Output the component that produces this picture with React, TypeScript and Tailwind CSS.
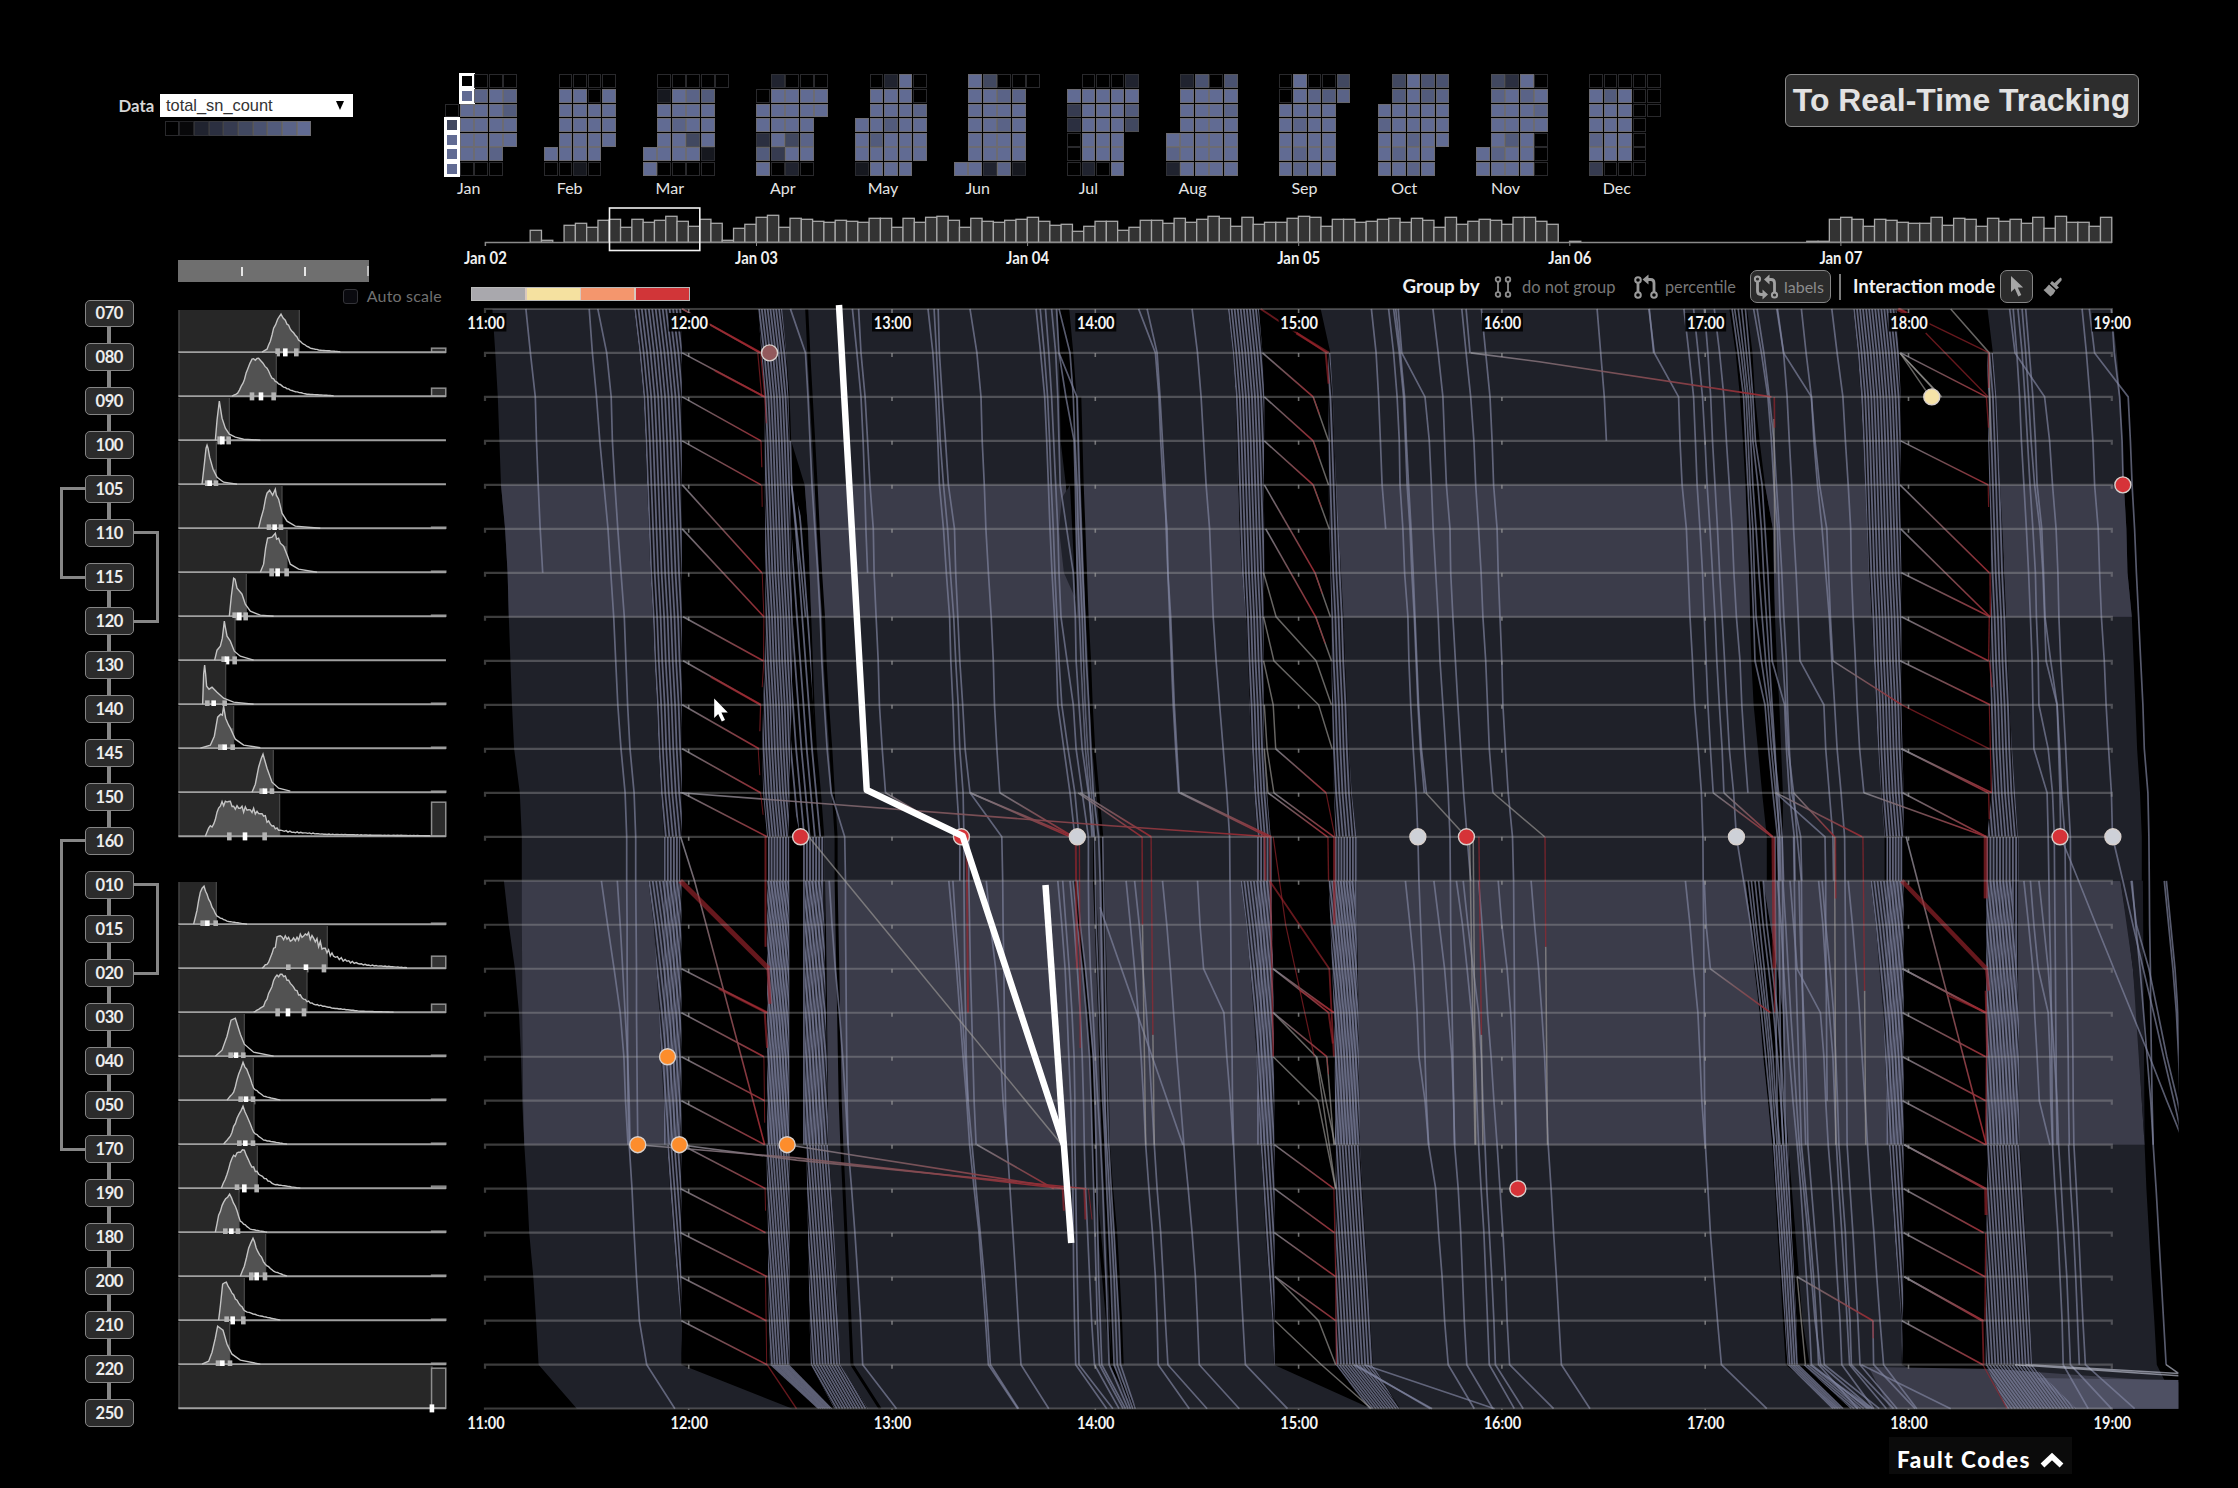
import React from "react";

/* ---------- geometry ---------- */
type Tile = "A" | "B" | "C";
const px = (t: Tile, k: number) =>
  t === "A" ? 470 + k / 2.45 : t === "B" ? 1100 + k / 2.8 : 1640 + k / 2.8;
const ry = (r: number) => 308.9 + 43.99 * r;
const pts = (t: Tile, r0: number, xs: number[]) =>
  xs.map((x, i) => `${px(t, x).toFixed(1)},${ry(r0 + i).toFixed(1)}`).join(" ");
const pairs = (t: Tile, a: number[][]) =>
  a.map(([x, r]) => `${px(t, x).toFixed(1)},${ry(r).toFixed(1)}`).join(" ");

/* ---------- calendar ---------- */
const months: { name: string; ml: string; lab: string; rows: string[] }[] = [
  { name: "Jan", ml: "ml-0", lab: "pl-[12px]", rows: [".0000", ".9898", "09997", "59999", "99999", "9998.", "9000."] },
  { name: "Feb", ml: "ml-[26.3px]", lab: "pl-[13px]", rows: [".0000", ".9909", ".9999", ".9999", ".9999", "9999.", "0010."] },
  { name: "Mar", ml: "ml-[26.3px]", lab: "pl-[13px]", rows: [".00000", ".1987.", ".9999.", ".9899.", ".9959.", "99991.", "90000."] },
  { name: "Apr", ml: "ml-[26.3px]", lab: "pl-[14px]", rows: [".2000", "09999", "99999", "9999.", "3958.", "7499.", "9020."] },
  { name: "May", ml: "ml-[26.3px]", lab: "pl-[13px]", rows: [".0290", ".9990", ".9998", "99799", "97999", "99999", "1999."] },
  { name: "Jun", ml: "ml-[26.3px]", lab: "pl-[12px]", rows: [".95000", ".9988.", ".9999.", ".9989.", ".9999.", ".9999.", "99281."] },
  { name: "Jul", ml: "ml-[26.3px]", lab: "pl-[12px]", rows: [".0002", "99999", "49997", "39995", "0999.", "0999.", "0209."] },
  { name: "Aug", ml: "ml-[26.3px]", lab: "pl-[13px]", rows: [".2606", ".9999", ".9998", ".9999", "99999", "89999", "29999"] },
  { name: "Sep", ml: "ml-[40.3px]", lab: "pl-[13px]", rows: ["09005", "09878", "9999.", "9899.", "9999.", "9899.", "9899."] },
  { name: "Oct", ml: "ml-[26.3px]", lab: "pl-[14px]", rows: [".5966", ".7978", "99999", "89999", "99899", "9899.", "9989."] },
  { name: "Nov", ml: "ml-[26.3px]", lab: "pl-[15px]", rows: [".5390", ".8989", ".9998", ".9999", ".9790", "98990", "99990"] },
  { name: "Dec", ml: "ml-[40.3px]", lab: "pl-[14px]", rows: ["00000", "97900", "99900", "9990.", "8990.", "9990.", "4000."] },
];
const shade: Record<string, string> = {
  ".": "", "0": "bg-black border border-[#29292c]", "1": "bg-[#16181f] border border-[#2a2b30]",
  "2": "bg-[#20232f] border border-[#303136]", "3": "bg-[#2b2f40] border border-[#38393f]",
  "4": "bg-[#363b50] border border-[#424349]", "5": "bg-[#414860] border border-[#4e4f54]",
  "6": "bg-[#4a5270] border border-[#57575c]", "7": "bg-[#525b7c] border border-[#5f5f63]",
  "8": "bg-[#5a6387] border border-[#66666b]", "9": "bg-[#616b93] border border-[#6c6b72]",
};
const Month = ({ m, first }: { m: (typeof months)[0]; first: boolean }) => {
  const n = m.rows[0].length;
  return (
    <div className={`shrink-0 ${m.ml}`}>
      {m.rows.map((row, r) => (
        <div key={r} className="flex h-[14.6px]">
          {row.split("").map((c, i) => {
            const sel = first && ((i === 1 && r < 2) || (i === 0 && r > 2));
            return (
              <div key={i} className="flex h-[14.6px] w-[14.5px] shrink-0">
                <div className={`m-[0.4px] flex-1 ${shade[c]} ${sel ? "outline-[3px] outline-white -outline-offset-2" : ""}`} />
              </div>
            );
          })}
        </div>
      ))}
      <div className={`mt-[2px] text-[16px] leading-[20px] text-[#e4e4e4] ${m.lab} ${n > 5 ? "w-[87px]" : "w-[72px]"}`}>{m.name}</div>
    </div>
  );
};

/* ---------- overview ---------- */
const lead: [number, number][] = [[4, 12], [5, 2], [7, 17], [8, 19], [9, 15], [10, 22], [11, 23], [12, 15], [13, 23], [14, 20], [15, 22], [16, 26], [17, 21], [18, 16], [19, 23], [20, 19], [21, 2], [22, 14], [23, 18]];
const mid = [25, 27, 15, 24, 23, 21, 20, 22, 21, 20, 24, 24, 15, 24, 20, 25, 26, 22, 15, 24, 21, 20, 22, 23, 25, 21, 17, 18, 11, 16, 21, 21, 12, 15, 22, 22, 19, 24, 20, 23, 26, 24, 16, 25, 18, 20, 20, 24, 26, 25, 16, 23, 23, 20, 21, 23, 24, 20, 24, 22, 15, 25, 18, 21, 23, 22, 18, 25, 25, 21, 18];
const tail = [23, 25, 23, 16, 23, 22, 20, 19, 19, 25, 17, 24, 23, 16, 24, 21, 23, 19, 25, 14, 26, 20, 20, 16, 25];
const bars: [number, number][] = [...lead, ...mid.map((h, i) => [24 + i, h] as [number, number]), [96, 1], [117, 1], [118, 1], ...tail.map((h, i) => [119 + i, h] as [number, number])];
const Overview = () => (
  <svg viewBox="450 207 1788 63" className="block h-[63px] w-[1788px] shrink-0">
    {bars.map(([h, v]) => (
      <rect key={h} x={485 + h * 11.297} y={242.3 - v} width={11.3} height={v} fill="#333" stroke="#a8a8a8" strokeWidth={1.3} />
    ))}
    <path d="M485.4 246V242.5H2112" fill="none" stroke="#8a8a8a" strokeWidth={1.4} />
    {["Jan 02", "Jan 03", "Jan 04", "Jan 05", "Jan 06", "Jan 07"].map((l, i) => (
      <g key={l}>
        <path d={`M${485.4 + i * 271.1} 242v4`} stroke="#8a8a8a" />
        <text x={485.4 + i * 271.1} y={263.8} textAnchor="middle" fontSize={16.5} fontWeight={700} fill="#f0f0f0" textLength={43} lengthAdjust="spacingAndGlyphs">{l}</text>
      </g>
    ))}
    <rect x={609.5} y={208} width={90.3} height={42.5} fill="none" stroke="#f2f2f2" strokeWidth={1.6} />
  </svg>
);

/* ---------- station distributions ---------- */
type Hist = { s: number; m: number[]; b: number; n?: number; p: number[] };
const upper: Hist[] = [
  { s: 777, m: [712, 735, 768], b: 4, n: 1, p: [665, 0, 680, 3, 690, 11, 700, 24, 712, 33, 722, 38, 735, 32, 750, 23, 765, 17, 775, 12, 790, 8, 810, 4, 840, 2, 900, 0.5] },
  { s: 708, m: [635, 662, 700], b: 8, n: 1, p: [575, 0, 592, 3, 608, 13, 622, 27, 635, 37, 645, 36, 655, 38, 668, 33, 680, 28, 695, 18, 710, 14, 730, 9, 760, 5, 800, 2, 880, 0.5] },
  { s: 567, m: [538, 546, 565], b: 0, p: [525, 0, 530, 20, 537, 39, 545, 22, 555, 12, 567, 6, 585, 3, 610, 1, 660, 0] },
  { s: 528, m: [501, 508, 527], b: 0, p: [485, 0, 492, 20, 497, 36, 500, 39, 503, 36, 508, 27, 518, 15, 530, 7, 550, 2, 590, 0] },
  { s: 725, m: [686, 703, 722], b: 1, p: [655, 0, 662, 10, 670, 19, 676, 30, 680, 35, 688, 38, 697, 33, 705, 39, 708, 33, 715, 29, 725, 15, 740, 7, 765, 2, 840, 0] },
  { s: 740, m: [694, 712, 739], b: 1, p: [660, 0, 670, 8, 676, 24, 682, 34, 695, 35, 705, 39, 709, 33, 715, 34, 720, 29, 730, 26, 742, 16, 750, 8, 775, 3, 830, 0] },
  { s: 618, m: [583, 597, 616], b: 1, p: [567, 0, 573, 20, 580, 38, 584, 37, 590, 28, 605, 22, 615, 12, 630, 5, 660, 1, 700, 0] },
  { s: 584, m: [550, 560, 583], b: 0, p: [523, 0, 530, 10, 540, 14, 546, 22, 552, 39, 555, 33, 560, 24, 570, 19, 582, 9, 600, 4, 640, 0] },
  { s: 556, m: [501, 520, 553], b: 1, p: [487, 0, 490, 30, 493, 39, 496, 30, 499, 18, 506, 15, 515, 17, 530, 12, 550, 6, 580, 2, 640, 0] },
  { s: 580, m: [540, 553, 577], b: 1, p: [480, 0, 510, 3, 522, 12, 532, 31, 541, 34, 546, 33, 550, 42, 556, 30, 565, 23, 570, 20, 585, 9, 610, 3, 660, 0.5] },
  { s: 699, m: [664, 674, 695], b: 1, p: [635, 0, 645, 8, 655, 25, 663, 34, 668, 38, 680, 24, 695, 10, 715, 4, 750, 1] },
  { s: 718, m: [567, 614, 673], b: 34, n: 3, p: [495, 0, 505, 8, 520, 12, 530, 24, 540, 30, 555, 35, 570, 35, 580, 30, 600, 28, 620, 26, 650, 25, 670, 20, 690, 12, 715, 6, 760, 4, 850, 2, 1000, 1, 1170, 0.5] },
];
const lower: Hist[] = [
  { s: 528, m: [487, 501, 526], b: 1, n: 1, p: [460, 0, 470, 14, 480, 32, 491, 38, 500, 30, 515, 17, 530, 8, 560, 3, 620, 0] },
  { s: 861, m: [744, 797, 851], b: 12, n: 3.5, p: [665, 0, 685, 6, 700, 20, 715, 32, 740, 29, 750, 27, 770, 31, 800, 33, 820, 30, 850, 20, 880, 12, 920, 7, 980, 3, 1100, 0.5] },
  { s: 800, m: [712, 743, 791], b: 8, n: 1.5, p: [640, 0, 670, 6, 690, 22, 705, 35, 725, 38, 745, 32, 765, 22, 790, 13, 820, 8, 880, 4, 960, 1, 1060, 0] },
  { s: 612, m: [571, 587, 609], b: 1, p: [525, 0, 545, 6, 560, 20, 572, 36, 585, 38, 600, 22, 612, 12, 640, 4, 700, 0] },
  { s: 639, m: [601, 617, 638], b: 1, n: 1, p: [560, 0, 580, 8, 595, 26, 608, 38, 625, 26, 640, 12, 670, 4, 720, 0] },
  { s: 641, m: [597, 615, 638], b: 1, n: 1, p: [550, 0, 570, 8, 590, 26, 608, 38, 620, 28, 640, 12, 670, 4, 740, 0] },
  { s: 651, m: [590, 612, 649], b: 2, n: 1.5, p: [543, 0, 560, 14, 575, 30, 595, 36, 612, 38, 630, 24, 655, 14, 700, 4, 780, 0] },
  { s: 596, m: [555, 573, 593], b: 1, n: 1, p: [525, 0, 535, 17, 550, 30, 568, 38, 585, 26, 600, 11, 630, 3, 680, 0] },
  { s: 676, m: [633, 649, 674], b: 1, n: 1, p: [600, 0, 612, 10, 625, 28, 638, 38, 652, 25, 675, 12, 700, 5, 740, 0] },
  { s: 612, m: [559, 577, 609], b: 1, n: 1, p: [535, 0, 540, 14, 547, 36, 558, 38, 575, 27, 595, 17, 615, 9, 650, 5, 720, 0] },
  { s: 568, m: [533, 546, 569], b: 1, p: [485, 0, 505, 3, 515, 12, 525, 26, 532, 38, 548, 34, 560, 20, 575, 10, 600, 4, 660, 0] },
  { s: 1175, m: [1175], b: 40, p: [] },
];
const HistRow = ({ h }: { h: Hist }) => {
  const X = (k: number) => k / 3 - 137.7;
  const line: number[][] = [];
  for (let i = 0; i < h.p.length; i += 2) {
    const x = X(h.p[i]), v = h.p[i + 1];
    line.push([x, v]);
    if (h.n && i + 2 < h.p.length) {
      const x2 = X(h.p[i + 2]), v2 = h.p[i + 3];
      const n = Math.max(1, Math.round((x2 - x) / 1.8));
      for (let j = 1; j < n; j++) {
        const f = j / n, b = v + (v2 - v) * f;
        line.push([x + (x2 - x) * f, Math.max(0, b + Math.sin((x + j) * 12.9 + j * 2.4) * h.n * Math.min(1, b / 22))]);
      }
    }
  }
  const cut = line.filter((q) => q[0] <= X(h.s));
  const str = (a: number[][]) => a.map(([x, v]) => `${x.toFixed(1)},${(43.2 - v).toFixed(1)}`).join(" ");
  return (
    <svg viewBox="0 0 268 44" className="block h-[43.99px] w-[268px] overflow-visible">
      <rect x={0.3} y={1} width={X(h.s)} height={42.5} fill="#272727" />
      <path d={`M1 1V43M${X(h.s)} 1V43`} stroke="#484848" strokeWidth={1.2} />
      {cut.length > 0 && <polygon points={`${str(cut)} ${X(h.s)},${43.2 - cut[cut.length - 1][1]} ${X(h.s)},43.2`} fill="#525252" />}
      {h.b > 0 && <rect x={253.6} y={43.2 - h.b} width={14.2} height={h.b} fill={h.b > 20 ? "#2c2c2c" : "#333"} stroke="#8e8e8e" strokeWidth={1.5} />}
      <path d="M0.3 43.2H268" stroke="#a0a0a0" strokeWidth={1.9} />
      {line.length > 0 && <polyline points={str(line)} fill="none" stroke="#c4c4c4" strokeWidth={1.4} />}
      {h.m.map((k, i) => (
        <rect key={i} x={X(k) - 2.3} y={39.4} width={4.6} height={8} fill={i === 1 || h.m.length === 1 ? "#fff" : "#b4b4b4"} />
      ))}
    </svg>
  );
};

/* ---------- marey chart data ---------- */
const z1L = [402, 415, 425, 430, 434, 438, 442, 448, 452, 458, 462, 468, 475];
const z1Lb = [437, 450, 457, 463, 468, 475, 483, 490, 498, 507, 517, 518, 790];
const z4L = [358, 372, 380, 383, 386, 390, 397, 408, 415, 418, 425, 432, 440];
const z4Lb = [393, 410, 420, 430, 437, 443, 450, 457, 463, 473, 483, 487, 760];
const z5R = [618, 645, 652, 656, 662, 668, 675, 682, 687, 692, 697, 705, 718];
const z5Rb = [720, 720, 722, 724, 725, 727, 728, 735, 742, 750, 756, 764, 840];
const z7L = [597, 610, 618, 625, 630, 635, 640, 648, 655, 660, 667, 675, 685];
const z7Lb = [645, 660, 670, 680, 686, 692, 697, 705, 712, 722, 732, 733, 1000];
const z8R = [973, 988, 998, 1003, 1008, 1015, 1022, 1025, 1030, 1035, 1042, 1050, 1058];
const z8Rb = [1060, 1060, 1060, 1061, 1062, 1062, 1063, 1072, 1080, 1087, 1092, 1098, 1220];
type Area = [Tile, number[], number[], Tile, number[], number[]];
const areas: Area[] = [
  ["A", [55, 62, 68, 72, 76, 86, 92, 95, 99, 103, 108, 122, 127], [127, 127, 128, 128, 129, 130, 133, 140, 145, 155, 162, 168, 262], "A", z1L, z1Lb],
  ["A", [765, 775, 783, 787, 820, 828, 832, 836, 840, 844, 850, 860, 868], [870, 872, 874, 875, 876, 877, 878, 885, 892, 898, 902, 907, 975], "B", z4L, z4Lb],
  ["B", z5R, z5Rb, "C", [250, 268, 280, 288, 295, 300, 305, 308, 312, 318, 330, 342, 355], [295, 310, 320, 335, 345, 358, 370, 378, 385, 393, 400, 408, 560]],
  ["C", [300, 315, 322, 335, 350, 372, 375, 378, 383, 390, 395, 400, 400], [345, 365, 385, 400, 405, 408, 415, 425, 435, 445, 455, 475, 640], "C", z7L, z7Lb],
  ["C", z8R, z8Rb, "C", [1320, 1335, 1345, 1350, 1355, 1362, 1365, 1377, 1382, 1387, 1392, 1400, 1405], [1345, 1365, 1380, 1392, 1398, 1405, 1413, 1418, 1425, 1432, 1440, 1447, 1508]],
];
const poly = (lt: Tile, l: number[], rt: Tile, r: number[], row: number) =>
  pts(lt, row, l) + " " + pts(rt, row, r).split(" ").reverse().join(" ");
const areaPolys = areas.flatMap(([lt, l, lb, rt, r, rb]) => [
  poly(lt, [...l, l[12]], rt, [...r, r[12]], 0),
  poly(lt, lb, rt, rb, 13),
]);

/* dense bundles: [tile, first row, left edge, right edge, offsets per row, spacing] */
const rep = (n: number, v: number) => Array(n).fill(v) as number[];
type Zone = [Tile, number, number[], number[], number[], number];
const flow = [0, 13, 23, 28, 32, 36, 40, 46, 50, 56, 60, 66, 76];
const flowL = [0, 15, 28, 40, 50, 58, 66];
const flowE = [0, 8, 16, 24, 31, 38];
const zones: Zone[] = [
  ["A", 0, z1L, rep(13, 519), flow, 8.5],
  ["A", 12, rep(8, 475), rep(8, 515), rep(8, 0), 7.5],
  ["A", 13, z1Lb.slice(0, 7), rep(7, 518), flowL, 8.5],
  ["A", 19, z1Lb.slice(6, 12), rep(6, 518), flowE, 8],
  ["A", 0, [706, 714, 722, 722, 722, 723, 723, 724, 722, 718, 716, 718, 728], [765, 775, 780, 783, 785, 785, 788, 790, 790, 788, 785, 783, 780], flow, 7],
  ["A", 12, rep(8, 730), rep(8, 782), rep(8, 0), 7],
  ["A", 13, rep(7, 728), rep(7, 782), flowL, 7],
  ["A", 19, [726, 728, 730, 730, 732, 735], rep(6, 783), flowE, 6.5],
  ["A", 4, [786, 788, 790, 790, 790, 788, 786, 786, 810], [790, 820, 828, 832, 836, 840, 846, 856, 866], [0, 10, 18, 26, 34, 42, 50, 60, 70], 13],
  ["A", 12, rep(8, 816), rep(8, 868), rep(8, 0), 7.5],
  ["A", 13, rep(7, 820), [862, 868, 870, 872, 874, 876, 878], flowL, 8],
  ["A", 19, [824, 826, 828, 830, 832, 835], [878, 885, 892, 898, 902, 907], flowE, 7],
  ["A", 24, [735, 852], [782, 888], [0, 112], 5.5],
  ["A", 24, [835, 893], [907, 975], [0, 62], 7],
  ["B", 0, z4L, [445, 455, 460, 460, 458, 460, 460, 458, 458, 458, 460, 468, 478], flow, 8.5],
  ["B", 12, rep(8, 440), rep(8, 482), rep(8, 0), 9],
  ["B", 13, z4Lb.slice(0, 7), [478, 482, 485, 486, 487, 488, 488], flowL, 9],
  ["B", 19, z4Lb.slice(6, 12), rep(6, 489), flowE, 9],
  ["B", 1, [638, 640, 640, 640, 642, 645, 648, 648, 650, 652, 655, 660], z5R.slice(1), flow.slice(1), 9],
  ["B", 12, rep(8, 658), rep(8, 720), rep(8, 0), 8],
  ["B", 13, [640, 645, 650, 655, 657, 658, 658], [712, 718, 720, 724, 725, 727, 728], flowL, 8],
  ["B", 19, rep(6, 660), z5Rb.slice(6, 12), flowE, 8.5],
  ["B", 24, [660, 752], [764, 838], [0, 95], 8],
  ["C", 0, z7L, [718, 725, 730, 730, 728, 730, 732, 732, 732, 732, 735, 738, 738], flow, 8.5],
  ["C", 12, rep(8, 690), rep(8, 735), rep(8, 0), 8],
  ["C", 13, z7Lb.slice(0, 7), rep(7, 738), flowL, 9],
  ["C", 19, z7Lb.slice(6, 12), [738, 738, 738, 738, 736, 734], flowE, 9],
  ["C", 1, [972, 974, 975, 978, 982, 982, 983, 980, 982, 985, 985, 972], z8R.slice(1), flow.slice(1), 9],
  ["C", 12, rep(8, 970), rep(8, 1060), rep(8, 0), 9],
  ["C", 13, rep(7, 970), [1040, 1048, 1055, 1061, 1062, 1062, 1063], flowL, 9],
  ["C", 19, [972, 972, 970, 970, 968, 968], z8Rb.slice(6, 12), flowE, 8.5],
  ["C", 24, [968, 1028], [1098, 1222], [0, 90], 9],
  ["C", 19, [372, 380, 388, 396, 405, 413], [415, 420, 425, 432, 438, 442], flowE, 7],
  ["C", 24, [413, 538], [445, 572], [0, 125], 7],
  ["C", 24, [457, 590], [478, 655], [0, 150], 9],
];

const lines: [Tile, number, number[]][] = [
  ["A", 0, [137, 148, 160, 163, 167, 172, 178]],
  ["A", 0, [292, 300, 310, 318, 328, 338, 345, 352, 357, 362, 370, 380, 384, 384, 385, 385, 386, 386, 387, 390, 397, 402, 408, 415, 433, 502]],
  ["A", 0, [313, 335, 346, 349, 355, 362, 370, 378, 382, 386, 392, 402, 406, 406, 407, 408, 408, 409, 410, 411]],
  ["A", 13, [322, 337, 353, 368, 377, 381, 387]],
  ["A", 13, [361, 368, 374, 380, 386, 390, 392]],
  ["A", 0, [785, 822, 828, 833, 838, 845, 852, 858, 862, 868, 875, 885, 918, 920, 920, 921, 922, 923, 924, 926, 935, 943, 950, 957, 962, 1045]],
  ["A", 3, [785, 788, 800, 812, 822]],
  ["A", 0, [937, 948, 958, 963, 967, 970, 974]],
  ["A", 0, [952, 958, 968, 974, 980, 988, 990, 995, 1000, 1003, 1010, 1018]],
  ["A", 0, [1122, 1134, 1141, 1146, 1150, 1160, 1167, 1175, 1178, 1183, 1187, 1193, 1200, 1200]],
  ["A", 0, [1137, 1143, 1148, 1152, 1160, 1170, 1177, 1185, 1190, 1196, 1200, 1208, 1210, 1210, 1211, 1212, 1214, 1216, 1220]],
  ["A", 0, [1147, 1150, 1157, 1165, 1172, 1187, 1190, 1195, 1200, 1207, 1213, 1225, 1303, 1305, 1306, 1308, 1309, 1310, 1312, 1314]],
  ["A", 0, [1225, 1242, 1252, 1255, 1260, 1264, 1270, 1277, 1282, 1285, 1291, 1298]],
  ["A", 13, [1173, 1183, 1192, 1200, 1208, 1217, 1224, 1235, 1247, 1255, 1263, 1270, 1342]],
  ["A", 13, [1183, 1190, 1198, 1206, 1213, 1220, 1230, 1240, 1250, 1260, 1268, 1275, 1344]],
  ["A", 12, [1222, 1222, 1224, 1226, 1229, 1232, 1235, 1240]],
  ["A", 13, [1265, 1275, 1288, 1295, 1300, 1306, 1316, 1323, 1330, 1337, 1343, 1350, 1418]],
  ["A", 13, [880, 887, 895, 905, 913, 920, 926]],
  ["A", 0, [1387, 1398, 1408, 1413, 1417, 1421, 1426, 1432, 1437, 1440, 1455, 1470, 1482]],
  ["A", 0, [1397, 1407, 1415, 1420, 1424, 1429, 1433, 1438, 1443, 1450, 1465, 1482, 1492]],
  ["A", 0, [1410, 1418, 1425, 1430, 1435, 1440, 1443, 1448, 1463, 1478, 1485, 1500, 1515]],
  ["A", 0, [1425, 1435, 1440, 1443, 1446, 1462, 1478, 1483, 1485, 1492, 1500, 1515, 1528]],
  ["A", 0, [1437, 1443, 1487, 1490, 1493, 1497, 1501, 1506, 1510, 1516, 1521, 1527, 1540]],
  ["A", 0, [1443, 1470, 1478, 1482, 1487, 1490, 1495, 1500, 1503, 1507, 1513, 1522, 1530]],
  ["A", 1, [1443, 1460, 1480, 1483, 1485, 1488, 1493, 1497, 1502, 1508, 1517, 1524]],
  ["A", 13, [1440, 1450, 1458, 1463, 1467, 1472, 1475, 1477, 1478, 1479, 1481, 1484, 1560]],
  ["A", 13, [1452, 1460, 1468, 1475, 1480, 1482, 1482, 1484, 1486, 1488, 1490, 1492, 1575]],
  ["A", 13, [1470, 1480, 1488, 1495, 1500, 1503, 1505, 1508, 1513, 1518, 1523, 1530, 1590]],
  ["A", 13, [1478, 1488, 1500, 1510, 1518, 1522, 1525, 1528, 1531, 1534, 1537, 1542, 1600]],
  ["A", 13, [1487, 1495, 1508, 1518, 1527, 1531, 1534, 1536, 1538, 1540, 1544, 1548, 1606]],
  ["A", 12, [1515, 1515, 1516, 1520, 1526, 1532, 1538, 1545, 1550, 1554, 1558, 1562, 1566, 1612]],
  ["A", 12, [1530, 1532, 1534, 1538, 1542, 1546, 1550, 1556, 1560, 1565, 1570, 1574, 1578, 1618]],
  ["A", 12, [1540, 1544, 1546, 1548, 1550, 1552, 1555, 1560, 1566, 1572, 1578, 1582, 1586, 1624]],
  ["A", 12, [1550, 1552, 1554, 1556, 1558, 1560, 1562, 1565, 1571, 1578, 1584, 1590, 1594, 1630]],
  ["B", 0, [108, 155, 165, 170, 177, 188, 190, 195, 200, 205, 212, 220]],
  ["B", 0, [132, 160, 168, 175, 182, 185, 190, 198, 203, 208, 215, 222]],
  ["B", 0, [258, 273, 283, 290, 297, 307, 312, 317, 325, 335, 345, 355, 363, 364, 366, 367, 368, 370, 371, 374, 380, 386, 393, 400, 407, 525]],
  ["B", 0, [760, 773, 780, 785, 790, 800]],
  ["B", 0, [808, 822, 832, 838, 840, 848, 853, 862, 865, 870, 877, 885, 890, 893, 898, 903, 907, 910, 914, 920, 940, 948, 958, 965, 975, 1048]],
  ["B", 0, [822, 838, 850, 855, 860, 868, 873, 880, 885, 890, 897, 908]],
  ["B", 0, [828, 841, 853, 858, 864, 871, 877, 882, 887, 892, 900, 914]],
  ["B", 0, [835, 845, 910, 922, 928, 933, 940, 947, 952, 960, 968, 975, 980, 981, 982, 984, 986, 988, 990, 993, 1003, 1010, 1015, 1020, 1027, 1100]],
  ["B", 0, [932, 947, 960, 965, 970, 980, 982, 988, 995, 1002, 1010, 1018, 1028, 1038]],
  ["B", 0, [1013, 1025, 1038, 1047, 1052, 1060, 1067, 1072, 1080, 1085, 1090, 1100]],
  ["B", 0, [1025, 1036]],
  ["B", 0, [1068, 1080, 1092, 1098, 1102, 1112, 1115, 1120, 1125, 1128, 1135, 1143, 1155, 1158, 1159, 1160, 1161, 1162, 1163, 1165, 1168]],
  ["B", 0, [1392, 1402, 1412, 1418]],
  ["B", 13, [73, 85, 97, 107, 115, 122, 128, 137, 147, 155, 160, 163, 250]],
  ["B", 13, [97, 110, 120, 130, 138, 145, 152, 160, 170, 177, 183, 190, 300]],
  ["B", 13, [175, 187, 197, 206, 215, 225, 235, 247, 258, 267, 273, 278, 390]],
  ["B", 13, [273, 280, 290, 347, 355, 365, 373]],
  ["B", 13, [855, 868, 880, 888, 893, 910, 920]],
  ["B", 13, [935, 950, 965, 975, 985, 990, 993]],
  ["B", 13, [998, 1015, 1028, 1040, 1050, 1055, 1060, 1067, 1075, 1080, 1085, 1090, 1160]],
  ["B", 13, [1017, 1030, 1045, 1060, 1068, 1072, 1078, 1083, 1090, 1097, 1103, 1107, 1185]],
  ["B", 13, [1060, 1070, 1078, 1085, 1095, 1103, 1112, 1120, 1128, 1135, 1140, 1147, 1270]],
  ["B", 13, [1115, 1125, 1140, 1150, 1157, 1162, 1165]],
  ["B", 13, [1207, 1217, 1228, 1237, 1245, 1250, 1255, 1263, 1270, 1278, 1285, 1292, 1372]],
  ["B", 24, [710, 930]], ["B", 24, [716, 925]], ["B", 24, [740, 1105]],
  ["B", 0, [1538, 1550]],
  ["C", 0, [25, 40, 108, 112, 118, 130, 135, 140, 147, 153, 163, 172, 176, 177, 178, 179, 180, 180, 181, 183, 190, 197, 207, 217, 228, 355]],
  ["C", 0, [123, 137, 150, 155, 160, 168, 175, 180, 185, 190, 197, 205]],
  ["C", 0, [150, 163, 175, 182, 188, 196, 203, 210, 215, 222, 230, 235]],
  ["C", 0, [180, 190, 198, 203, 210, 217, 223, 230, 237, 243, 250, 262, 270, 290, 310, 325, 340, 352, 364, 376]],
  ["C", 0, [208, 223, 235, 242, 250, 258, 263, 270, 280, 285, 293, 302]],
  ["C", 0, [258, 275, 290, 296, 302, 308, 313, 318, 322, 350, 360, 372, 385, 388]],
  ["C", 0, [265, 283, 297, 303, 308, 316, 320, 325, 340, 358, 368, 380, 392, 395]],
  ["C", 0, [275, 290, 303, 310, 316, 325, 333, 342, 352, 365, 375, 388, 398, 402]],
  ["C", 0, [285, 298, 310, 316, 330, 340, 346, 354, 362, 370, 378, 384, 390, 392]],
  ["C", 0, [295, 306, 316, 323, 342, 350, 358, 364, 370, 405, 410, 418, 432, 434]],
  ["C", 0, [318, 340, 358, 368, 375, 385, 388, 392, 400, 408, 415, 430]],
  ["C", 0, [328, 347, 362, 375, 382, 390, 397, 403, 410, 413, 418, 425, 450, 453]],
  ["C", 0, [383, 402, 412, 418, 425, 430, 437, 443, 448, 515, 520, 530, 540, 542]],
  ["C", 0, [385, 402, 480, 490, 503, 523, 528, 533, 540]],
  ["C", 0, [452, 465, 480, 487, 497, 510, 520, 530, 537, 545, 552, 563, 573, 574, 575, 576, 577, 578, 579, 580]],
  ["C", 0, [537, 552, 568, 575, 583, 590, 592, 597, 603, 608, 615, 627]],
  ["C", 11, [380, 518, 520, 520, 521, 522, 523, 524]],
  ["C", 11, [430, 440, 452, 453, 454, 456, 458, 460, 464]],
  ["C", 0, [1035, 1050, 1133, 1147, 1155, 1165, 1170, 1173, 1178, 1185, 1192, 1198, 1205, 1206, 1208, 1210, 1211, 1212, 1213, 1215]],
  ["C", 0, [1045, 1055, 1063, 1068, 1075, 1082, 1088, 1093, 1098, 1100, 1103, 1140, 1143, 1145, 1147, 1150, 1152, 1153, 1154, 1156]],
  ["C", 0, [1058, 1070, 1078, 1085, 1092, 1100, 1107, 1110, 1115, 1117, 1143, 1155, 1160, 1161, 1162, 1163, 1164, 1165, 1166, 1168]],
  ["C", 0, [1070, 1080, 1088, 1095, 1105, 1120, 1128, 1133, 1137, 1168, 1175, 1180, 1190, 1191, 1193, 1195, 1197, 1199, 1200, 1202]],
  ["C", 0, [1080, 1090, 1100, 1107, 1112, 1125, 1130, 1134, 1150, 1168, 1172, 1176, 1178]],
  ["C", 0, [1238, 1250, 1260, 1268, 1273, 1283, 1287, 1292, 1300, 1305, 1312, 1320, 1323, 1352, 1380, 1409, 1438, 1466, 1495, 1523]],
  ["C", 0, [1258, 1273, 1367, 1373, 1378, 1385, 1390, 1396, 1402, 1408, 1412, 1422, 1425, 1426, 1427, 1429, 1430, 1432, 1434, 1437, 1445, 1452, 1459, 1466, 1473]],
  ["C", 0, [1320, 1328, 1343, 1350, 1353]],
  ["C", 12, [1178, 1228, 1277, 1327, 1377, 1427, 1475, 1525]],
  ["C", 13, [1375, 1390, 1425, 1450, 1475, 1505, 1530]],
  ["C", 13, [1378, 1388, 1400, 1410, 1420, 1430, 1437]],
  ["C", 13, [1468, 1480, 1492, 1502, 1508, 1512]], ["C", 13, [1474, 1486, 1498, 1506, 1510, 1514]],
  ["C", 13, [127, 140, 150, 162, 168, 173, 182]],
  ["C", 13, [180, 185, 197]],
  ["C", 13, [303, 318, 333, 348, 360, 368, 376]],
  ["C", 13, [312, 325, 340, 354, 366, 374, 384]],
  ["C", 13, [322, 335, 348, 360, 372, 380, 392]],
  ["C", 13, [332, 345, 360, 374, 385, 394, 402]],
  ["C", 13, [345, 355, 370, 385, 395, 402, 410]],
  ["C", 12, [378, 378, 379, 380, 381, 382, 384, 388]],
  ["C", 12, [388, 389, 390, 391, 392, 394, 396, 400]],
  ["C", 12, [398, 399, 400, 401, 402, 404, 406, 410]],
  ["C", 12, [430, 432, 434, 436, 440, 444, 448, 452, 464, 476, 486, 494, 500, 610]],
  ["C", 13, [385, 395, 402, 410, 418, 428, 440, 450, 458, 466, 474, 480, 640]],
  ["C", 13, [400, 408, 415, 422, 430, 438, 446, 458, 470, 480, 490, 506, 650]],
  ["C", 13, [420, 430, 440, 505, 515, 520, 527, 537, 545, 552, 560, 565, 655]],
  ["C", 13, [445, 448, 452, 458, 464, 468, 470, 480, 490, 500, 508, 516, 670]],
  ["C", 13, [500, 512, 520, 530, 540, 545, 550, 557, 565, 573, 580, 587, 690]],
  ["C", 13, [510, 520, 532, 542, 548, 553, 557, 566, 575, 580, 588, 592, 710]],
  ["C", 13, [583, 595, 605, 615, 622, 630, 637, 645, 655, 663, 672, 682, 775]],
  ["C", 19, [580, 588, 596, 603, 610, 616, 720]],
  ["C", 23, [652, 654, 770]], ["C", 24, [620, 870]],
  ["C", 13, [1075, 1088, 1100, 1105, 1112, 1118, 1148]],
  ["C", 13, [1093, 1103, 1115, 1143, 1148, 1150, 1155, 1162, 1170, 1176, 1182, 1185, 1255]],
  ["C", 13, [1117, 1130, 1143, 1152, 1160, 1168, 1172, 1180, 1187, 1195, 1200, 1205, 1320]],
  ["C", 19, [1200, 1206, 1214, 1220, 1225, 1230]],
  ["C", 19, [1215, 1222, 1228, 1234, 1240, 1247, 1385]],
];

const jump = (t: Tile, list: number[][][]) => list.map((p) => [t, p] as [Tile, number[][]]);
const jumps = [
  ...jump("A", [
    [[520, 0], [710, 1]], [[520, 1], [722, 2]], [[520, 2], [713, 3]], [[520, 3], [713, 4]], [[520, 4], [715, 6]], [[520, 5], [720, 7]],
    [[522, 7], [718, 8]], [[522, 8], [712, 9]], [[520, 9], [708, 10]], [[520, 10], [712, 11]], [[520, 11], [728, 12]],
    [[516, 12], [550, 13], [722, 19]], [[518, 15], [728, 16]], [[518, 16], [720, 17]], [[518, 17], [722, 18]], [[518, 18], [722, 19]],
    [[518, 19], [724, 20]], [[516, 20], [724, 21]], [[516, 21], [728, 22]], [[516, 22], [726, 23]], [[518, 23], [728, 24]],
    [[1225, 11], [1470, 12]], [[1225, 11], [1480, 12]], [[1298, 11], [1478, 12]], [[1490, 11], [1646, 12]], [[1495, 11], [1669, 12]],
    [[515, 11], [830, 11.22], [1570, 11.75], [1960, 12]], [[1018, 11], [1200, 12]],
    [[411, 19], [800, 19.3], [1455, 20]], [[513, 19], [800, 19.35], [1510, 20]], [[777, 19], [1460, 20]], [[1242, 19], [1430, 20]],
  ]),
  ...jump("B", [
    [[455, 1], [597, 2]], [[460, 2], [597, 3]], [[460, 3], [597, 4]], [[460, 4], [602, 6]], [[464, 5], [604, 7]],
    [[492, 10], [633, 11]], [[470, 11], [637, 12]], [[487, 11], [655, 12]], [[222, 11], [470, 12]], [[226, 11], [480, 12]],
    [[485, 15], [640, 16]], [[485, 15], [655, 16]], [[485, 16], [635, 17]], [[488, 19], [655, 20]], [[488, 20], [656, 21]], [[488, 21], [660, 22]], [[490, 22], [660, 23]],
    [[1038, 1], [1230, 1.2], [1880, 2]],
  ]),
  ...jump("C", [
    [[730, 1], [970, 2]], [[730, 3], [975, 4]], [[728, 4], [978, 6]], [[730, 5], [980, 7]], [[732, 6], [980, 7]], [[732, 7], [975, 8]], [[728, 8], [980, 9]],
    [[732, 10], [975, 11]], [[732, 10], [985, 11]], [[735, 11], [970, 12]], [[627, 11], [970, 12]], [[745, 12], [970, 19]],
    [[735, 15], [970, 16]], [[735, 15], [966, 16]], [[735, 16], [968, 17]], [[735, 17], [968, 18]], [[735, 18], [968, 19]], [[740, 19], [970, 20]], [[740, 19], [965, 20]],
    [[738, 20], [962, 21]], [[738, 21], [966, 22]], [[740, 22], [962, 23]], [[740, 22], [957, 23]], [[733, 23], [960, 24]], [[540, 8], [733, 9]],
    [[205, 11], [370, 12]], [[235, 11], [372, 12]], [[380, 11], [622, 12]], [[430, 11], [545, 12]], [[197, 15], [365, 16]], [[440, 22], [652, 23]],
  ]),
];
const grays: [Tile, number[][]][] = [
  ["A", [[830, 12], [1450, 19]]],
  ["B", [[597, 2], [640, 3]]], ["B", [[597, 3], [640, 4]]], ["B", [[597, 4], [642, 5]]],
  ["B", [[602, 6], [645, 7]]], ["B", [[604, 7], [648, 8]]], ["B", [[605, 8], [648, 9]]],
  ["B", [[458, 6], [493, 7], [605, 8]]], ["B", [[458, 7], [487, 8], [612, 9], [650, 10]]], ["B", [[458, 8], [485, 9], [492, 10]]],
  ["B", [[460, 9], [468, 10], [487, 11]]], ["B", [[460, 10], [470, 11]]], ["B", [[635, 17], [655, 19]]],
  ["B", [[485, 16], [605, 17], [660, 20]]], ["B", [[485, 17], [610, 18], [660, 20]]], ["B", [[607, 17], [658, 19]]],
  ["B", [[490, 22], [612, 23], [660, 24]]], ["B", [[490, 23], [620, 24], [760, 25]]],
  ["B", [[912, 11], [1025, 12]]], ["B", [[1100, 11], [1245, 12]]], ["B", [[1045, 12], [1052, 19]]], ["B", [[1035, 12], [1050, 19]]],
  ["B", [[1068, 16.5], [1072, 19]]], ["B", [[1248, 14.5], [1253, 19]]], ["B", [[148, 16.5], [152, 19]]], ["B", [[119, 14], [128, 19]]],
  ["C", [[870, 0], [978, 1], [980, 3]]], ["C", [[728, 1], [800, 1.85]]], ["C", [[728, 1], [845, 2]]], ["C", [[728, 1], [825, 1.85]]],
  ["C", [[375, 2.5], [378, 6]]], ["C", [[545, 12], [548, 19]]], ["C", [[629, 15.5], [632, 19]]], ["C", [[440, 22], [463, 24]]],
];
const reds: [Tile, number[][], number][] = [
  ["A", [[520, 0], [715, 1]], 1.5], ["A", [[590, 0.37], [712, 1]], 2], ["A", [[712, 1], [722, 2], [726, 2.6]], 1.2], ["A", [[705, 1], [715, 2]], 1.2],
  ["A", [[713, 3], [715, 3.6]], 1.2], ["A", [[715, 4], [716, 4.5]], 1], ["A", [[716, 6], [720, 7]], 1], ["A", [[720, 7], [719, 8]], 1], ["A", [[720, 8], [716, 8.6]], 1],
  ["A", [[712, 9], [710, 9.6]], 1.2], ["A", [[706, 10], [710, 10.6]], 1], ["A", [[712, 11], [718, 11.5]], 1], ["A", [[724, 12], [724, 14.5]], 2], ["A", [[600, 1.4], [722, 2]], 2], ["A", [[590, 8.36], [712, 9]], 2.2],
  ["A", [[515, 13], [732, 15]], 5], ["A", [[610, 15.45], [728, 16]], 2.8], ["A", [[730, 15], [735, 15.8]], 3], ["A", [[722, 16], [728, 16.8]], 2],
  ["A", [[720, 17], [722, 18.5]], 1], ["A", [[723, 20], [724, 20.5]], 1], ["A", [[724, 22], [727, 24]], 1], ["A", [[728, 24], [800, 25]], 1.4],
  ["A", [[1217, 12.2], [1220, 16]], 2], ["A", [[1484, 12], [1487, 15]], 2], ["A", [[1493, 12], [1495, 16.8]], 1.3], ["A", [[1452, 20], [1455, 20.5]], 2], ["A", [[1505, 20], [1508, 20.7]], 2], ["A", [[1515, 20], [1524, 20.7]], 1],
  ["B", [[450, 0], [635, 1]], 1.8], ["B", [[550, 0.55], [640, 1]], 2.5], ["B", [[632, 1], [640, 1.7]], 2], ["B", [[597, 2], [615, 2.4]], 1.2], ["B", [[597, 3], [615, 3.4]], 1.2], ["B", [[597, 4], [620, 4.5]], 1.2],
  ["B", [[602, 6], [622, 6.47]], 1.2], ["B", [[604, 7], [630, 7.6]], 1.2], ["B", [[633, 11], [658, 12]], 1.2],
  ["B", [[118, 12], [119, 14]], 1.6], ["B", [[143, 12], [148, 16.5]], 1.4], ["B", [[461, 12], [463, 13]], 2], ["B", [[475, 12], [477, 13], [485, 17]], 1.6],
  ["B", [[638, 12], [640, 13]], 1.4], ["B", [[656, 12], [656, 14]], 2.4], ["B", [[485, 12], [520, 14], [600, 17]], 1.2], ["B", [[475, 13], [642, 15], [655, 17]], 1.8],
  ["B", [[560, 15.5], [655, 16]], 1.6], ["B", [[640, 16], [652, 16.7]], 2], ["B", [[635, 17], [640, 17.4]], 1], ["B", [[655, 20], [660, 22], [662, 24]], 1.2],
  ["B", [[1061, 12], [1068, 16.5]], 1.4], ["B", [[1246, 12], [1248, 14.5]], 1.4],
  ["C", [[722, 0], [745, 0.1]], 4], ["C", [[725, 0], [978, 1]], 1.4], ["C", [[800, 0.55], [975, 2]], 1.4], ["C", [[976, 1], [976, 1.8]], 1.4], ["C", [[970, 2], [976, 2.7]], 1.4], ["C", [[975, 4], [976, 4.5]], 1.2],
  ["C", [[980, 6], [981, 7]], 1.4], ["C", [[978, 7], [976, 8]], 1.4], ["C", [[978, 8], [986, 8.6]], 1.4], ["C", [[978, 9], [984, 11]], 1.2], ["C", [[733, 9], [978, 10]], 1.4], ["C", [[976, 11], [978, 11.6]], 1.4],
  ["C", [[376, 2], [377, 2.7]], 1.6], ["C", [[373, 12], [376, 15]], 3.4], ["C", [[376, 15], [377, 16]], 1.4], ["C", [[547, 12], [548, 13.4]], 1.6], ["C", [[624, 12], [629, 15.5]], 1.4],
  ["C", [[968, 12], [968, 13.4]], 4], ["C", [[733, 13], [970, 15]], 4.5], ["C", [[970, 15], [976, 15.5]], 3], ["C", [[968, 15.5], [972, 17]], 2], ["C", [[970, 17], [968, 19]], 1.4], ["C", [[968, 20], [969, 20.6]], 3], ["C", [[968, 21], [966, 23]], 1.4], ["C", [[959, 23], [962, 24]], 1.8],
  ["C", [[652, 23], [653, 23.4]], 1.4], ["C", [[960, 24], [1028, 25]], 1.2], ["C", [[860, 15.6], [970, 16]], 2],
];
const dots: [Tile, number, number, string][] = [
  ["A", 734, 1, "#93595c"], ["A", 810, 12, "#d63338"], ["A", 1204, 12, "#d63338"], ["A", 1488, 12, "#ced1d8"],
  ["B", 890, 12, "#ced1d8"], ["B", 1026, 12, "#d63338"], ["B", 1170, 20, "#d63338"],
  ["C", 817, 2, "#f6e3a8"], ["C", 1352, 4, "#d63338"], ["C", 270, 12, "#ced1d8"], ["C", 1176, 12, "#d63338"], ["C", 1324, 12, "#ced1d8"],
  ["A", 484, 17, "#fd8d2c"], ["A", 411, 19, "#fd8d2c"], ["A", 513, 19, "#fd8d2c"], ["A", 777, 19, "#fd8d2c"],
];
const hours = ["11:00", "12:00", "13:00", "14:00", "15:00", "16:00", "17:00", "18:00", "19:00"];
const hx = (i: number) => 485.4 + i * 203.3;

const Marey = () => (
  <svg viewBox="450 303 1788 1134" className="block h-[1134px] w-[1788px] shrink-0">
    <defs>
      <clipPath id="plot"><rect x={450} y={307.8} width={1728.6} height={1102} /></clipPath>
      <clipPath id="areas">{areaPolys.map((p, i) => <polygon key={i} points={p} />)}</clipPath>
      <linearGradient id="fade">
        <stop offset="0" stopColor="#80808a" stopOpacity={0.9} />
        <stop offset="0.4" stopColor="#7e5c62" stopOpacity={0.9} />
        <stop offset="1" stopColor="#92252d" />
      </linearGradient>
      {zones.map(([t, r, l, rt], i) => (
        <clipPath key={i} id={`z${i}`}><polygon points={poly(t, l, t, rt, r)} /></clipPath>
      ))}
    </defs>
    <g clipPath="url(#plot)">
      <polygon points={pairs("A", [[83, 13], [95, 14], [110, 15], [120, 16], [125, 17], [128, 18], [133, 19], [133, 13]])} fill="#22232c" />
      {areaPolys.map((p, i) => <polygon key={i} points={p} fill="#1f2129" />)}
      <g clipPath="url(#areas)">
        <rect x={450} y={ry(4)} width={1740} height={ry(7) - ry(4)} fill="#3b3c4a" />
        <rect x={450} y={ry(13)} width={1740} height={ry(19) - ry(13)} fill="#3b3c4a" />
      </g>
      <polygon points={pairs("C", [[1345, 13], [1380, 15], [1413, 19], [1408, 13]])} fill="#1b1c24" />
      <polygon points={pairs("C", [[640, 24.05], [1000, 24.1], [1508, 24.4], [1508, 25], [700, 25]])} fill="#3b3c4a" />
      <polygon points={pairs("C", [[1110, 24.3], [1508, 24.35], [1508, 25], [1220, 25]])} fill="#4e5063" />
      {/* stoppages around the 14:00 bundle */}
      <polygon points={pairs("A", [[1440, 0], [1468, 0], [1478, 1], [1486, 2], [1486, 7], [1460, 4], [1447, 3], [1443, 1]])} fill="#000" />
      <polygon points={pairs("A", [[1470, 4], [1484, 6.6], [1455, 6], [1443, 5], [1450, 4.3]])} fill="#20222b" />
      <g fill="none" stroke="#000" strokeWidth={3}>
        <polyline points={pts("A", 0, [825, 830, 836, 842, 848, 853, 859, 866, 870, 876, 884, 890, 897, 897, 899, 901, 903, 905, 907, 911, 916, 921, 926, 931, 936, 1005])} />
        <polyline points={pts("A", 2, [1494, 1497, 1500, 1504, 1508, 1512, 1518, 1522, 1528, 1538, 1548, 1551, 1553, 1556, 1558, 1560, 1562, 1564, 1572, 1582, 1588, 1594, 1598])} />
        <polyline points={pts("A", 8, [1500, 1505, 1511, 1520, 1530, 1530, 1534, 1538, 1542, 1545, 1548, 1552, 1557, 1562, 1567, 1572, 1576])} />
        <polyline points={pts("A", 13, [1482, 1492, 1503, 1513, 1522, 1526, 1529, 1532, 1542, 1552, 1562, 1570, 1630])} />
      </g>
      {zones.map(([t, r0, l, r, path, step], i) => {
        const out: React.ReactNode[] = [];
        for (let j = -22; j < 20; j++) {
          out.push(<polyline key={j} points={pts(t, r0, path.map((p) => l[0] + p + j * step + 2))} />);
        }
        return (
          <g key={i}>
            {step !== 13 && r0 < 24 && <polygon points={poly(t, l, t, r, r0)} fill="#30323f" fillOpacity={r0 === 13 ? 0.6 : 0.35} />}
            <g clipPath={`url(#z${i})`} fill="none" stroke="#7b7f9b" strokeOpacity={0.74} strokeWidth={1.8}>{out}</g>
          </g>
        );
      })}
      <g fill="none" stroke="#8084a0" strokeOpacity={0.68} strokeWidth={1.7}>
        {lines.map(([t, r, xs], i) => <polyline key={i} points={pts(t, r, xs)} />)}
        <polyline points={pairs("B", [[0, 13.6], [232, 19]])} />
      </g>
      <g fill="none" stroke="#9b9894" strokeOpacity={0.66} strokeWidth={1.5}>
        {grays.map(([t, p], i) => <polyline key={i} points={pairs(t, p)} />)}
        <path d={`M${px("C", 1050)} ${ry(24)}L2178.6 ${ry(24.25)}M${px("C", 1080)} ${ry(24)}L2178.6 ${ry(24.2)}M${px("C", 1473)} ${ry(24)}L2178.6 ${ry(24.2)}`} stroke="#c0c2d2" />
      </g>
      <g fill="none" stroke="url(#fade)" strokeWidth={1.6}>
        {jumps.map(([t, p], i) => <polyline key={i} points={pairs(t, p)} />)}
      </g>
      <g fill="none" stroke="#a0262e" strokeOpacity={0.64}>
        {reds.map(([t, p, w], i) => <polyline key={i} points={pairs(t, p)} strokeWidth={w} />)}
      </g>
      {Array.from({ length: 26 }, (_, r) => (
        <g key={r}>
          <path d={`M485 ${ry(r) + 4}v-4H2111.8v4`} fill="none" stroke="#b0b0b0" strokeOpacity={0.34} strokeWidth={2.2} />
          <path d={hours.slice(1, 8).map((_, i) => `M${hx(i + 1)} ${ry(r)}v4`).join("")} stroke="#9a9a9a" strokeOpacity={0.7} strokeWidth={1.6} />
        </g>
      ))}
    </g>
    {dots.map(([t, k, r, c], i) => (
      <circle key={i} cx={px(t, k)} cy={ry(r)} r={8} fill={c} stroke="#d8d0cc" strokeWidth={1.4} />
    ))}
    <g fill="none" stroke="#fff" strokeWidth={6.5} strokeLinejoin="round">
      <polyline points={`839,305 ${px("A", 972)},790 ${px("A", 1207)},836 ${px("A", 1455)},1145 ${px("A", 1473)},1243`} />
      <polyline points={`${px("A", 1410)},885 ${px("A", 1455)},1145`} />
    </g>
    {hours.map((h, i) => (
      <g key={h} fontSize={16.5} fontWeight={700} fill="#f4f4f4" textAnchor="middle">
        <rect x={hx(i) - 20} y={313} width={41} height={18.5} fill="#000" fillOpacity={0.9} />
        <text x={hx(i) + 0.5} y={328.5} textLength={37.5} lengthAdjust="spacingAndGlyphs">{h}</text>
        <text x={hx(i) + 0.5} y={1428.5} textLength={37.5} lengthAdjust="spacingAndGlyphs">{h}</text>
      </g>
    ))}
    <path d="M714.2 698.5v19.5l4-4 3.6 7.6 3.2-1.6-3.6-7.4h6.4z" fill="#fff" />
  </svg>
);

/* ---------- stations ---------- */
const stations = ["070", "080", "090", "100", "105", "110", "115", "120", "130", "140", "145", "150", "160", "010", "015", "020", "030", "040", "050", "170", "190", "180", "200", "210", "220", "250"];
const Stations = () => (
  <div className="relative w-[177.700px] shrink-0 pt-[92.5px] pl-[84.5px]">
    <div className="absolute top-[280px] left-[59.5px] h-[92px] w-[25px] border-y-[3.5px] border-l-[3.5px] border-[#868686]" />
    <div className="absolute top-[324px] left-[134px] h-[92px] w-[25px] border-y-[3.5px] border-r-[3.5px] border-[#868686]" />
    <div className="absolute top-[632px] left-[59.5px] h-[312px] w-[25px] border-y-[3.5px] border-l-[3.5px] border-[#868686]" />
    <div className="absolute top-[676px] left-[134px] h-[92px] w-[25px] border-y-[3.5px] border-r-[3.5px] border-[#868686]" />
    {stations.map((s) => (
      <div key={s} className="flex h-[43.99px] w-[49.5px] flex-col items-center">
        <div className="flex h-[27.5px] w-full shrink-0 items-center justify-center rounded-[5px] border-[1.5px] border-[#858585] bg-[#2b2b2b] pt-px text-[16.500px] font-bold tracking-[-0.4px] text-[#ededed]">{s}</div>
        {!["110", "160", "250"].includes(s) && <div className="w-[4px] flex-1 bg-[#868686]" />}
      </div>
    ))}
  </div>
);

/* ---------- toolbar icons ---------- */
const Ring = ({ x, y }: { x: number; y: number }) => <circle cx={x} cy={y} r={2.3} />;
const IconPlain = () => (
  <svg viewBox="0 0 18 22" className="h-[22px] w-[18px] shrink-0" fill="none" stroke="#8d8d8d" strokeWidth={1.8}>
    <Ring x={4} y={3.5} /><Ring x={4} y={18.5} /><Ring x={14} y={3.5} /><Ring x={14} y={18.5} /><path d="M4 6v10M14 6v10" />
  </svg>
);
const IconPull = () => (
  <svg viewBox="0 0 26 26" className="h-[26px] w-[26px] shrink-0" fill="none" stroke="#9a9a9a" strokeWidth={2}>
    <circle cx={5} cy={6} r={2.8} /><circle cx={5} cy={21} r={2.8} /><circle cx={21} cy={21} r={2.8} />
    <path d="M5 9v9M21 18V9q0-3.500-3.500-3.500H14" strokeWidth={2.8} /><path d="M15.500 0.500v10l-6-5z" fill="#9a9a9a" stroke="none" />
  </svg>
);
const IconCompare = () => (
  <svg viewBox="0 0 26 26" className="h-[26px] w-[26px] shrink-0" fill="none" stroke="#a2a2a2" strokeWidth={2}>
    <circle cx={4.500} cy={5} r={2.600} /><circle cx={21.500} cy={21} r={2.600} />
    <path d="M4.500 8v9q0 3.500 3.500 3.500h2M21.500 18V9q0-3.500-3.500-3.500h-2" strokeWidth={2.800} />
    <path d="M9.500 15.500v10l5.500-5zM16.500 0.500v10L11 5.500z" fill="#a2a2a2" stroke="none" />
  </svg>
);

export default function App() {
  return (
    <div className="flex h-[1488px] w-[2238px] flex-col overflow-hidden bg-black font-['Lato',sans-serif] text-white">
      <header className="flex h-[207px] shrink-0 pt-[74px]">
        <div className="w-[445px] shrink-0 pt-[20px] pl-[118.500px]">
          <div className="flex h-[22.5px] items-center">
            <span className="w-[41.500px] text-[16.800px] font-bold text-[#d6d6d6]">Data</span>
            <div className="flex h-[22.5px] w-[193px] items-center justify-between bg-white pr-[9px] pl-[6px] font-['Liberation_Sans',sans-serif] text-[16.400px] text-[#333]">
              <span>total_sn_count</span>
              <svg viewBox="0 0 8 9" className="h-[9px] w-[8px]"><path d="M0 0h8L4 9z" fill="#000" /></svg>
            </div>
          </div>
          <div className="mt-[4px] ml-[46px] flex h-[15px]">
            {["0", "1", "2", "3", "4", "5", "6", "7", "8", "9"].map((l) => (
              <div key={l} className={`w-[14.7px] ${l === "1" ? "border border-[#232326] bg-[#08080a]" : shade[l]}`} />
            ))}
          </div>
        </div>
        {months.map((m, i) => <Month key={m.name} m={m} first={i === 0} />)}
        <button className="mr-[99.500px] ml-auto flex h-[53px] w-[354px] shrink-0 items-center justify-center rounded-[6px] border-[1.5px] border-[#8a8a8a] bg-[#2d2d2d] pt-[1px] font-['Liberation_Sans',sans-serif] text-[31.900px] font-bold text-[#e2e2e2]">
          <span className="whitespace-nowrap">To Real-Time Tracking</span>
        </button>
      </header>
      <main className="flex shrink-0">
        <Stations />
        <section className="w-[272.300px] shrink-0 pt-[53px]">
          <div className="ml-[0.800px] flex h-[22px] w-[191px] items-center bg-[#6f6f6f]">
            <div className="ml-[62.500px] h-[9px] w-[2.5px] bg-[#e6e6e6]" />
            <div className="ml-[61px] h-[9px] w-[2.5px] bg-[#e6e6e6]" />
            <div className="ml-[60.5px] h-[10px] w-[3px] bg-[#bdbdbd]" />
          </div>
          <div className="mt-[4px] flex h-[20px] items-center pl-[165px]">
            <div className="size-[15px] rounded-[3px] border border-[#333338] bg-[#0a0a0f]" />
            <span className="ml-[9px] text-[16px] tracking-[0.2px] text-[#707070]">Auto scale</span>
          </div>
          <div className="pt-[3px]">
            {upper.map((h, i) => <HistRow key={i} h={h} />)}
            <div className="h-[43.99px]" />
            {lower.map((h, i) => <HistRow key={i} h={h} />)}
          </div>
        </section>
        <section className="flex w-[1788px] shrink-0 flex-col">
          <Overview />
          <div className="flex h-[33px] shrink-0 items-center">
            <div className="mt-[15px] ml-[21px] flex h-[14.500px] w-[219px] shrink-0 gap-[1.5px] border-[1.5px] border-[#b9b9b9] bg-[#d9c8bd]">
              <div className="flex-1 bg-[#a9a8ad]" />
              <div className="flex-1 bg-[#f5e1a0]" />
              <div className="flex-1 bg-[#f4966d]" />
              <div className="flex-1 bg-[#d13538]" />
            </div>
            <span className="ml-[712.500px] w-[91.500px] shrink-0 text-[18.800px] font-bold whitespace-nowrap text-[#f0f0f0]">Group by</span>
            <IconPlain />
            <span className="ml-[10px] w-[111px] shrink-0 pt-[2px] text-[16.500px] whitespace-nowrap text-[#777]">do not group</span>
            <IconPull />
            <span className="ml-[6px] w-[85px] shrink-0 pt-[2px] text-[16.300px] whitespace-nowrap text-[#777]">percentile</span>
            <div className="flex h-[33px] w-[81.500px] shrink-0 items-center rounded-[7px] border-[1.5px] border-[#858585] bg-[#2b2b2b] pl-[2px]">
              <IconCompare />
              <span className="ml-[5px] text-[16px] text-[#8c8c8c]">labels</span>
            </div>
            <div className="ml-[8px] h-[26px] w-[1.5px] shrink-0 bg-[#7a7a7a]" />
            <span className="ml-[12px] w-[147.500px] shrink-0 text-[18.600px] font-bold whitespace-nowrap text-[#f0f0f0]">Interaction mode</span>
            <div className="flex h-[33px] w-[33px] shrink-0 items-center justify-center rounded-[7px] border-[1.5px] border-[#858585] bg-[#2b2b2b]">
              <svg viewBox="0 0 14 21" className="h-[21px] w-[14px]"><path d="M1 0v16l3.800-3.500 3.500 8 3-1.400-3.500-7.600h5.400z" fill="#a6a6a6" /></svg>
            </div>
            <svg viewBox="0 0 20 20" className="ml-[10px] h-[20px] w-[20px] shrink-0">
              <path d="M17.500 0.500q2 1 1 3L14 8.500l2 2-2.500 2L7 6.500l2-2.500 2.500 2z" fill="#999" />
              <path d="M6 7.500l6.500 6q-2 4.500-5 6L0.500 13q1-1 2-1.500z" fill="#999" />
            </svg>
          </div>
          <Marey />
        </section>
      </main>
      <footer className="-mt-[6px] flex h-[51px] shrink-0 items-start pl-[1889px]">
        <button className="flex h-[37px] w-[183px] items-center bg-[#0b0b0b] pt-[8px] pl-[8px] text-[22.500px] font-black tracking-[1.5px]">
          <span className="w-[143px] shrink-0 text-left whitespace-nowrap">Fault Codes</span>
          <svg viewBox="0 0 24 16" className="h-[16px] w-[24px] shrink-0" fill="none" stroke="#fff" strokeWidth={5.500}><path d="M2.500 13.500L12 4.500l9.500 9" /></svg>
        </button>
      </footer>
    </div>
  );
}
